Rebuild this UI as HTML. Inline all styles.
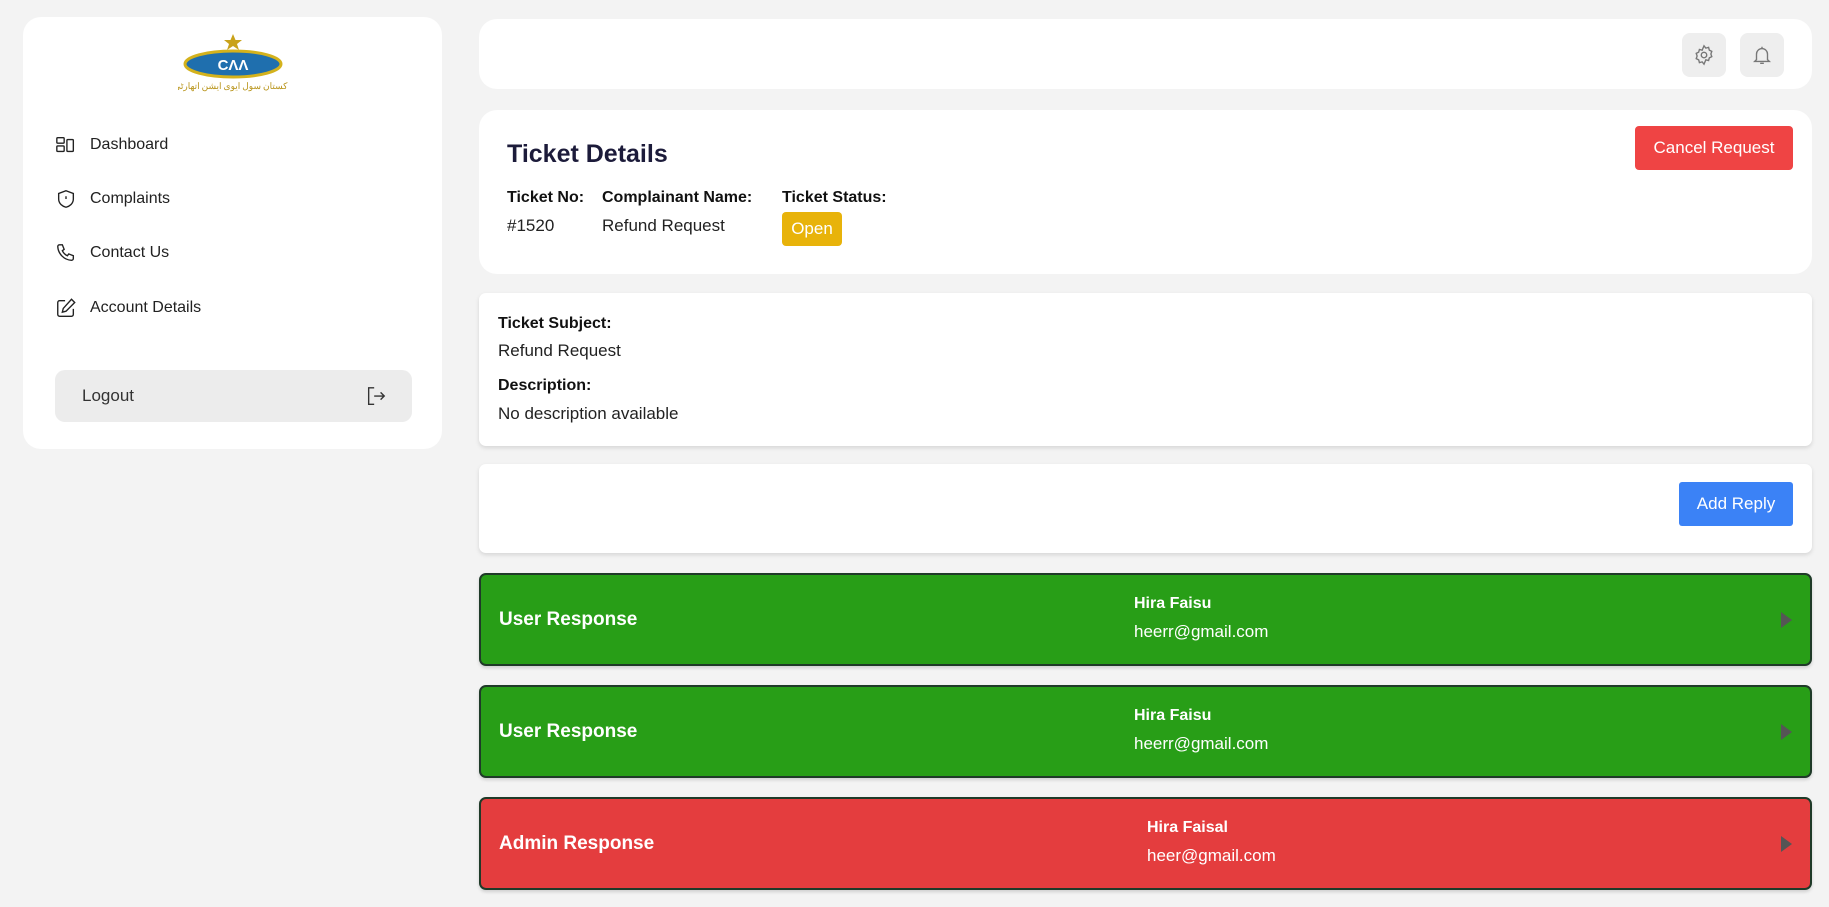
<!DOCTYPE html>
<html><head><meta charset="utf-8"><style>
*{box-sizing:border-box;margin:0;padding:0}
body{width:1829px;height:907px;background:#f3f3f3;font-family:"Liberation Sans",sans-serif;position:relative;overflow:hidden;color:#111}
.card{position:absolute;background:#fff;border-radius:18px}
.abs{position:absolute}
.nav{position:absolute;left:55px;display:flex;align-items:center;font-size:16px;color:#222}
.nav svg{width:22px;height:22px;margin-right:13px;margin-left:0}
.resp{position:absolute;left:479px;width:1333px;height:93px;border:2px solid #1f3a28;border-radius:7px;color:#fff;box-shadow:0 2px 3px rgba(0,0,0,.15)}
.resp .t{position:absolute;left:18px;top:34px;font-size:19px;font-weight:bold}
.resp .n{position:absolute;top:20px;font-size:16px;font-weight:bold}
.resp .e{position:absolute;top:47px;font-size:17px}
.resp .a{position:absolute;right:18px;top:37px;width:0;height:0;border-left:11px solid #555;border-top:8px solid transparent;border-bottom:8px solid transparent}
</style></head><body>
<div class="card" style="left:23px;top:17px;width:419px;height:432px">
 <svg class="abs" style="left:155px;top:14px" width="110" height="66" viewBox="0 0 110 66">
  <polygon points="55,3 57.5,9 64,9 59,13 61,19 55,15 49,19 51,13 46,9 52.5,9" fill="#c9a21a"/>
  <ellipse cx="55" cy="33" rx="48" ry="13" fill="#1f6fae" stroke="#d4b21c" stroke-width="3"/>
  <text x="55" y="39" text-anchor="middle" font-family="Liberation Sans" font-weight="bold" font-size="15" fill="#fff">CΛΛ</text>
  <text x="55" y="58" text-anchor="middle" font-family="Noto Sans CJK SC, sans-serif" font-size="9" fill="#b8941a">پاکستان سول ایوی ایشن اتھارٹی</text>
 </svg>
</div>
<div class="nav" style="top:134px;left:55px"><svg viewBox="0 0 24 24" fill="none" stroke="#222" stroke-width="1.5"><rect x="2" y="4" width="8" height="6" rx="1"/><rect x="2" y="13" width="8" height="6" rx="1"/><rect x="13" y="6" width="7" height="13" rx="1"/></svg>Dashboard</div>
<div class="nav" style="top:188px"><svg viewBox="0 0 24 24" fill="none" stroke="#222" stroke-width="1.5"><path d="M12 3l8 3v6c0 5-4 8-8 9-4-1-8-4-8-9V6z"/><path d="M12 9v3"/></svg>Complaints</div>
<div class="nav" style="top:242px"><svg viewBox="0 0 24 24" fill="none" stroke="#222" stroke-width="1.5"><path d="M5 3h3l2 5-2 1.5a11 11 0 005.5 5.5L15 13l5 2v3a2 2 0 01-2 2A16 16 0 013 5a2 2 0 012-2z"/></svg>Contact Us</div>
<div class="nav" style="top:297px"><svg viewBox="0 0 24 24" fill="none" stroke="#222" stroke-width="1.5"><path d="M11 4H5a2 2 0 00-2 2v13a2 2 0 002 2h13a2 2 0 002-2v-6"/><path d="M18 2.5l3.5 3.5L12 15.5l-4 1 1-4z"/></svg>Account Details</div>
<div class="abs" style="left:55px;top:370px;width:357px;height:52px;background:#ececec;border-radius:10px">
 <span class="abs" style="left:27px;top:16px;font-size:17px;color:#333">Logout</span>
 <svg class="abs" style="left:310px;top:15px" width="22" height="22" viewBox="0 0 24 24" fill="none" stroke="#333" stroke-width="1.5"><path d="M10 3H4v18h6"/><path d="M10 12h11M17 8l4 4-4 4"/></svg>
</div>

<div class="card" style="left:479px;top:19px;width:1333px;height:70px">
 <div class="abs" style="left:1203px;top:14px;width:44px;height:44px;background:#eee;border-radius:8px"><svg style="margin:11px" width="22" height="22" viewBox="0 0 24 24" fill="none" stroke="#777" stroke-width="1.5"><circle cx="12" cy="12" r="3"/><path d="M12 2l2 2.5 3-.8.8 3 2.7 1.3-1 2.9 1 2.9-2.7 1.3-.8 3-3-.8L12 22l-2-2.5-3 .8-.8-3-2.7-1.3 1-2.9-1-2.9 2.7-1.3.8-3 3 .8z"/></svg></div>
 <div class="abs" style="left:1261px;top:14px;width:44px;height:44px;background:#eee;border-radius:8px"><svg style="margin:11px" width="22" height="22" viewBox="0 0 24 24" fill="none" stroke="#777" stroke-width="1.5"><path d="M6 17V11a6 6 0 0112 0v6l2 2H4z"/><path d="M10 21h4M12 3v2"/></svg></div>
</div>

<div class="card" style="left:479px;top:110px;width:1333px;height:164px">
 <div class="abs" style="left:28px;top:30px;font-size:25px;font-weight:bold;color:#1c1b3a">Ticket Details</div>
 <div class="abs" style="left:1156px;top:16px;width:158px;height:44px;background:#ef4444;border-radius:4px;color:#fff;font-size:17px;text-align:center;line-height:44px">Cancel Request</div>
 <div class="abs" style="left:28px;top:79px;font-size:16px;font-weight:bold">Ticket No:</div>
 <div class="abs" style="left:28px;top:106px;font-size:17px;color:#222">#1520</div>
 <div class="abs" style="left:123px;top:79px;font-size:16px;font-weight:bold">Complainant Name:</div>
 <div class="abs" style="left:123px;top:106px;font-size:17px;color:#222">Refund Request</div>
 <div class="abs" style="left:303px;top:79px;font-size:16px;font-weight:bold">Ticket Status:</div>
 <div class="abs" style="left:303px;top:102px;width:60px;height:34px;background:#e8b30a;border-radius:4px;color:#fff;font-size:17px;text-align:center;line-height:34px">Open</div>
</div>

<div class="card" style="left:479px;top:293px;width:1333px;height:153px;border-radius:7px;box-shadow:0 2px 4px rgba(0,0,0,.12)">
 <div class="abs" style="left:19px;top:22px;font-size:16px;font-weight:bold">Ticket Subject:</div>
 <div class="abs" style="left:19px;top:48px;font-size:17px;color:#222">Refund Request</div>
 <div class="abs" style="left:19px;top:84px;font-size:16px;font-weight:bold">Description:</div>
 <div class="abs" style="left:19px;top:111px;font-size:17px;color:#222">No description available</div>
</div>

<div class="card" style="left:479px;top:464px;width:1333px;height:89px;border-radius:7px;box-shadow:0 2px 4px rgba(0,0,0,.12)">
 <div class="abs" style="left:1200px;top:18px;width:114px;height:44px;background:#3b82f6;border-radius:3px;color:#fff;font-size:17px;text-align:center;line-height:44px">Add Reply</div>
</div>

<div class="resp" style="top:573px;background:#289e17"><div class="t">User Response</div><div class="n" style="left:653px">Hira Faisu</div><div class="e" style="left:653px">heerr@gmail.com</div><div class="a"></div></div>
<div class="resp" style="top:685px;background:#289e17"><div class="t">User Response</div><div class="n" style="left:653px">Hira Faisu</div><div class="e" style="left:653px">heerr@gmail.com</div><div class="a"></div></div>
<div class="resp" style="top:797px;background:#e43d3e"><div class="t">Admin Response</div><div class="n" style="left:666px">Hira Faisal</div><div class="e" style="left:666px">heer@gmail.com</div><div class="a"></div></div>
</body></html>
